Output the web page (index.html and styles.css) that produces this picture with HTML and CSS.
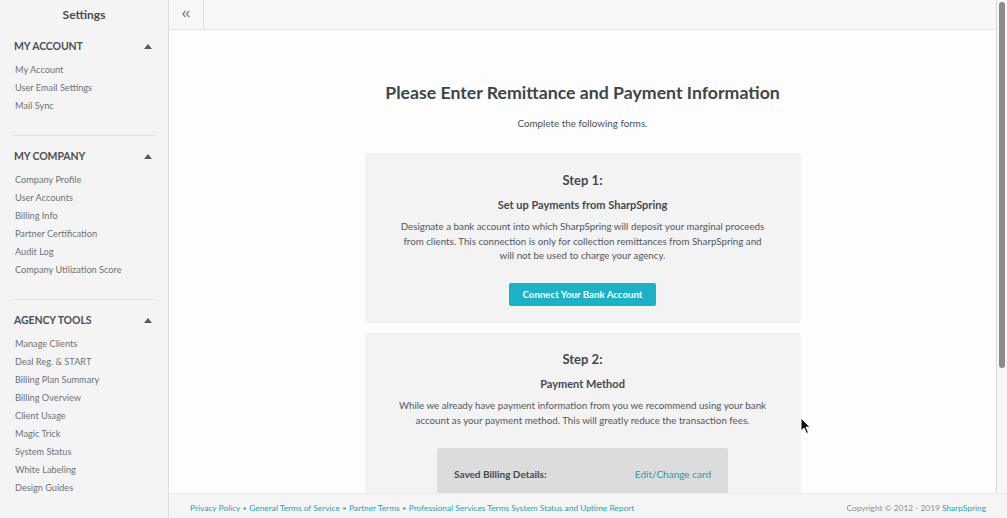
FILE: index.html
```html
<!DOCTYPE html>
<html lang="en">

<head>
    <meta charset="UTF-8">
    <meta name="viewport" content="width=device-width, initial-scale=1.0">
    <title>Settings - Remittance and Payment</title>
    <link rel="stylesheet" href="styles.css">
</head>

<body>
    <aside class="sidebar">
        <div class="sidebar-title">Settings</div>

        <div class="nav-section">
            <div class="nav-heading">My Account <span class="caret"></span></div>
            <ul class="nav-list">
                <li>My Account</li>
                <li>User Email Settings</li>
                <li>Mail Sync</li>
            </ul>
        </div>

        <div class="nav-section">
            <div class="nav-heading">My Company <span class="caret"></span></div>
            <ul class="nav-list">
                <li>Company Profile</li>
                <li>User Accounts</li>
                <li>Billing Info</li>
                <li>Partner Certification</li>
                <li>Audit Log</li>
                <li>Company Utilization Score</li>
            </ul>
        </div>

        <div class="nav-section">
            <div class="nav-heading">Agency Tools <span class="caret"></span></div>
            <ul class="nav-list">
                <li>Manage Clients</li>
                <li>Deal Reg. &amp; START</li>
                <li>Billing Plan Summary</li>
                <li>Billing Overview</li>
                <li>Client Usage</li>
                <li>Magic Trick</li>
                <li>System Status</li>
                <li>White Labeling</li>
                <li>Design Guides</li>
            </ul>
        </div>
    </aside>

    <div class="main">
        <div class="main-upper">
            <div class="main-body">
                <div class="topbar">
                    <button class="collapse-btn" type="button">
                        <svg width="10" height="10" viewBox="0 0 10 10">
                            <path d="M4.5 2 L1.8 5 L4.5 8 M8.2 2 L5.5 5 L8.2 8" fill="none" stroke="#7a7f84" stroke-width="1.2" />
                        </svg>
                    </button>
                </div>

                <div class="content">
                    <h1 class="page-title">Please Enter Remittance and Payment Information</h1>
                    <p class="page-sub">Complete the following forms.</p>

                    <section class="step-card">
                        <h2 class="step-title">Step 1:</h2>
                        <h3 class="step-sub">Set up Payments from SharpSpring</h3>
                        <p class="step-text">Designate a bank account into which SharpSpring will deposit your marginal proceeds<br>from clients. This connection is only for collection remittances from SharpSpring and<br>will not be used to charge your agency.</p>
                        <button class="btn-primary" type="button">Connect Your Bank Account</button>
                    </section>

                    <section class="step-card">
                        <h2 class="step-title">Step 2:</h2>
                        <h3 class="step-sub">Payment Method</h3>
                        <p class="step-text">While we already have payment information from you we recommend using your bank<br>account as your payment method. This will greatly reduce the transaction fees.</p>
                        <div class="billing-box">
                            <span class="billing-label">Saved Billing Details:</span>
                            <a class="billing-link" href="#">Edit/Change card</a>
                        </div>
                    </section>
                </div>
            </div>

            <div class="scrollbar">
                <div class="scroll-thumb"></div>
            </div>
        </div>

        <footer class="footer">
            <div class="footer-links">
                <a href="#">Privacy Policy</a> <span class="dot">&bull;</span>
                <a href="#">General Terms of Service</a> <span class="dot">&bull;</span>
                <a href="#">Partner Terms</a> <span class="dot">&bull;</span>
                <a href="#">Professional Services Terms</a>
                <a href="#">System Status and Uptime Report</a>
            </div>
            <div class="copyright">Copyright &copy; 2012 - 2019 <a href="#">SharpSpring</a></div>
        </footer>
    </div>

    <svg class="cursor" width="12" height="18" viewBox="0 0 12 18">
        <path d="M1 1 L1 14 L4 11 L6.5 16.5 L8.5 15.5 L6 10.2 L10 10.2 Z" fill="#111" stroke="#fff" stroke-width="1" />
    </svg>
</body>

</html>
```

FILE: styles.css
```css
* {
    box-sizing: border-box;
}

body {
    margin: 0;
    height: 100vh;
    display: flex;
    overflow: hidden;
    font-family: Lato, "Open Sans", Arial, sans-serif;
    color: #4a5156;
    background-color: #fdfdfd;
}

/* sidebar */
.sidebar {
    width: 169px;
    flex-shrink: 0;
    background-color: #f4f4f4;
    border-right: 1px solid #dedede;
}

.sidebar-title {
    height: 30px;
    line-height: 30px;
    text-align: center;
    font-size: 12px;
    font-weight: bold;
    color: #454c52;
}

.nav-section {
    margin: 0 14px;
    padding-top: 7px;
    border-bottom: 1px solid #e0e0e0;
}

.nav-section + .nav-section {
    padding-top: 11px;
}

.nav-section:last-child {
    border-bottom: none;
}

.nav-heading {
    display: flex;
    justify-content: space-between;
    align-items: center;
    height: 18px;
    font-size: 10.5px;
    font-weight: bold;
    text-transform: uppercase;
    color: #4a5156;
    letter-spacing: -0.1px;
}

.caret {
    width: 0;
    height: 0;
    margin-right: 2px;
    border-left: 4px solid transparent;
    border-right: 4px solid transparent;
    border-bottom: 5px solid #555b60;
}

.nav-list {
    list-style: none;
    margin: 6px 0 20px;
    padding: 0 0 0 1px;
}

.nav-list li {
    height: 18px;
    line-height: 18px;
    font-size: 9.2px;
    color: #6d7378;
}

/* main column */
.main {
    flex: 1;
    display: flex;
    flex-direction: column;
    min-width: 0;
}

.main-upper {
    flex: 1;
    display: flex;
    min-height: 0;
}

.main-body {
    flex: 1;
    display: flex;
    flex-direction: column;
    min-width: 0;
    overflow: hidden;
}

.topbar {
    height: 30px;
    flex-shrink: 0;
    display: flex;
    background-color: #f7f7f7;
    border-bottom: 1px solid #e2e2e2;
}

.collapse-btn {
    width: 35px;
    padding: 0;
    border: none;
    border-right: 1px solid #e0e0e0;
    background: transparent;
    display: flex;
    align-items: center;
    justify-content: center;
    padding-bottom: 2px;
}

.content {
    flex: 1;
    display: flex;
    flex-direction: column;
    align-items: center;
    background-color: #fdfdfd;
}

.page-title {
    margin: 52px 0 0;
    font-size: 17.7px;
    line-height: 22px;
    font-weight: bold;
    color: #3e4549;
}

.page-sub {
    margin: 12px 0 0;
    font-size: 9.8px;
    line-height: 14px;
    color: #4a5156;
}

.step-card {
    width: 436px;
    margin-top: 23px;
    padding: 18px 0 17px;
    background-color: #f3f3f3;
    display: flex;
    flex-direction: column;
    align-items: center;
    border-radius: 2px;
}

.step-card + .step-card {
    margin-top: 10px;
    padding-top: 17.5px;
}

.step-title {
    margin: 0;
    font-size: 13px;
    line-height: 18px;
    font-weight: bold;
    color: #43494e;
}

.step-sub {
    margin: 7.5px 0 0;
    font-size: 11px;
    line-height: 16px;
    font-weight: bold;
    color: #43494e;
}

.step-text {
    margin: 6.5px 0 0;
    font-size: 9.75px;
    line-height: 14.7px;
    text-align: center;
    color: #51575c;
}

.btn-primary {
    margin-top: 19.5px;
    width: 147px;
    height: 23px;
    border: none;
    border-radius: 2px;
    background-color: #1ab2c4;
    color: #fff;
    font-family: inherit;
    font-size: 9.7px;
    font-weight: bold;
}

.billing-box {
    margin-top: 20px;
    width: 291px;
    height: 60px;
    padding: 20px 17px 0;
    display: flex;
    justify-content: space-between;
    background-color: #dcdcdc;
    border-radius: 2px 2px 0 0;
    font-size: 10px;
}

.billing-label {
    font-weight: bold;
    color: #444a4f;
}

.billing-link {
    color: #1a9fb3;
    text-decoration: none;
}

/* fake scrollbar */
.scrollbar {
    width: 11px;
    flex-shrink: 0;
    background-color: #f7f7f7;
    border-left: 1px solid #d6d6d6;
    padding: 2px 2px 0 2px;
}

.scroll-thumb {
    height: 366px;
    background-color: #8b8b8b;
    border-radius: 3px;
}

/* footer */
.footer {
    height: 25px;
    flex-shrink: 0;
    display: flex;
    justify-content: space-between;
    align-items: center;
    padding: 4px 21px 0 21px;
    background-color: #f5f5f5;
    border-top: 1px solid #ececec;
    font-size: 8.35px;
}

.footer a {
    color: #1ba3b8;
    text-decoration: none;
}

.dot {
    color: #9aa0a4;
}

.copyright {
    color: #8a8f93;
}

.cursor {
    position: absolute;
    left: 800px;
    top: 417px;
}
```
